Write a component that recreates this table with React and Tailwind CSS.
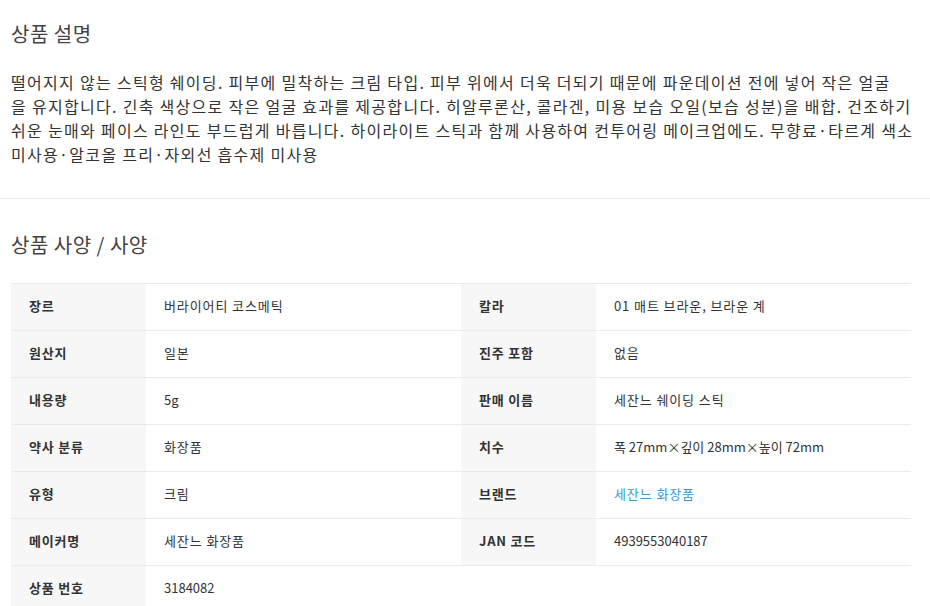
import React from "react";

const specs = [
  [
    { label: "장르", value: "버라이어티 코스메틱" },
    { label: "칼라", value: "01 매트 브라운, 브라운 계" },
  ],
  [
    { label: "원산지", value: "일본" },
    { label: "진주 포함", value: "없음" },
  ],
  [
    { label: "내용량", value: "5g", num: true },
    { label: "판매 이름", value: "세잔느 쉐이딩 스틱" },
  ],
  [
    { label: "약사 분류", value: "화장품" },
    { label: "치수", value: "폭 27mm×깊이 28mm×높이 72mm", num: true },
  ],
  [
    { label: "유형", value: "크림" },
    { label: "브랜드", value: "세잔느 화장품", link: true },
  ],
  [
    { label: "메이커명", value: "세잔느 화장품" },
    { label: "JAN 코드", value: "4939553040187", num: true },
  ],
  [{ label: "상품 번호", value: "3184082", num: true }, null],
];

const SpecCell = ({ item }) => {
  if (!item) {
    return (
      <>
        <div />
        <div />
      </>
    );
  }
  return (
    <>
      <div className="h-[47px] flex items-center pl-[18px] pb-[2px] bg-[#f7f7f7] border-b border-[#ebebeb] font-bold text-[#333] tracking-[0.8px]">
        {item.label}
      </div>
      <div
        className={
          "h-[47px] flex items-center pl-[18px] pb-[2px] border-b border-[#ebebeb] " +
          (item.link ? "text-[#3b98d6] " : "text-[#333] ") +
          (item.num ? "tracking-normal" : "tracking-[0.9px]")
        }
      >
        {item.value}
      </div>
    </>
  );
};

export default function App() {
  return (
    <div className="bg-white w-[930px] h-[606px] overflow-hidden font-['Noto_Sans_CJK_KR','Noto_Sans',sans-serif] text-[#333]">
      {/* 상품 설명 */}
      <section className="border-b border-[#ececec] pt-[20px] pb-[32px]">
        <div className="w-[900px] ml-[11px]">
          <h2 className="text-[20px] leading-[28px] font-normal text-[#444] tracking-[0.5px]">상품 설명</h2>
          <p className="mt-[22px] text-[16px] leading-[24px] tracking-[1.3px] whitespace-nowrap">
            떨어지지 않는 스틱형 쉐이딩. 피부에 밀착하는 크림 타입. 피부 위에서 더욱 더되기 때문에 파운데이션 전에 넣어 작은 얼굴
            <br />
            을 유지합니다. 긴축 색상으로 작은 얼굴 효과를 제공합니다. 히알루론산, 콜라겐, 미용 보습 오일(보습 성분)을 배합. 건조하기
            <br />
            쉬운 눈매와 페이스 라인도 부드럽게 바릅니다. 하이라이트 스틱과 함께 사용하여 컨투어링 메이크업에도. 무향료·타르계 색소
            <br />
            미사용·알코올 프리·자외선 흡수제 미사용
          </p>
        </div>
      </section>

      {/* 상품 사양 */}
      <section className="pt-[32px]">
        <div className="w-[900px] ml-[11px]">
          <h2 className="text-[20px] leading-[28px] font-normal text-[#444] tracking-[0.5px]">상품 사양 / 사양</h2>
          <div className="mt-[24px] grid grid-cols-[135px_315px_135px_315px] border-t border-[#ebebeb] text-[13px]">
            {specs.map((row, i) => (
              <React.Fragment key={i}>
                <SpecCell item={row[0]} />
                <SpecCell item={row[1]} />
              </React.Fragment>
            ))}
          </div>
        </div>
      </section>
    </div>
  );
}
